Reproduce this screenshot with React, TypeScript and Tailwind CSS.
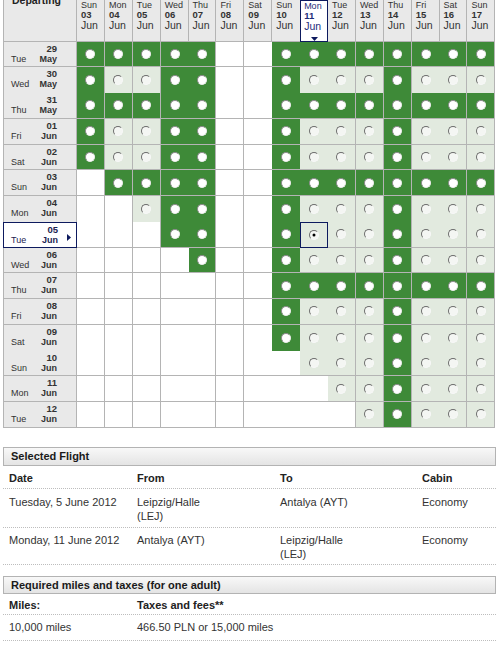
import React from "react";

type Kind = "G" | "L" | "W" | "S";

const LINE = "border-[#b4b4b4]";
const NAVY = "border-[#0d1a5e]";

const DATE_COLS: [string, string][] = [
  ["Sun", "03"], ["Mon", "04"], ["Tue", "05"], ["Wed", "06"], ["Thu", "07"],
  ["Fri", "08"], ["Sat", "09"], ["Sun", "10"], ["Mon", "11"], ["Tue", "12"],
  ["Wed", "13"], ["Thu", "14"], ["Fri", "15"], ["Sat", "16"], ["Sun", "17"],
];

const DEPART_ROWS: { d: string; n: string; m: string; c: string }[] = [
  { d: "Tue", n: "29", m: "May", c: "GGGGGWWGGGGGGGG" },
  { d: "Wed", n: "30", m: "May", c: "GLLGGWWGLLLGLLL" },
  { d: "Thu", n: "31", m: "May", c: "GGGGGWWGGGGGGGG" },
  { d: "Fri", n: "01", m: "Jun", c: "GLLGGWWGLLLGLLL" },
  { d: "Sat", n: "02", m: "Jun", c: "GLLGGWWGLLLGLLL" },
  { d: "Sun", n: "03", m: "Jun", c: "WGGGGWWGGGGGGGG" },
  { d: "Mon", n: "04", m: "Jun", c: "WWLGGWWGLLLGLLL" },
  { d: "Tue", n: "05", m: "Jun", c: "WWWGGWWGSLLGLLL" },
  { d: "Wed", n: "06", m: "Jun", c: "WWWWGWWGLLLGLLL" },
  { d: "Thu", n: "07", m: "Jun", c: "WWWWWWWGGGGGGGG" },
  { d: "Fri", n: "08", m: "Jun", c: "WWWWWWWGLLLGLLL" },
  { d: "Sat", n: "09", m: "Jun", c: "WWWWWWWGLLLGLLL" },
  { d: "Sun", n: "10", m: "Jun", c: "WWWWWWWWLLLGLLL" },
  { d: "Mon", n: "11", m: "Jun", c: "WWWWWWWWWLLGLLL" },
  { d: "Tue", n: "12", m: "Jun", c: "WWWWWWWWWWLGLLL" },
];

// column / row boundaries where the grid line is not drawn
const NO_V = new Set([3, 6, 7, 8, 12]);
const NO_H = new Set([1, 6, 11]);

const SEL_COL = 8;
const SEL_ROW = 7;

function Radio({ kind }: { kind: Kind }) {
  if (kind === "G") {
    return (
      <span className="block w-[10px] h-[10px] rounded-full bg-white border-[1.5px] border-t-[#8a8a8a] border-l-[#8a8a8a] border-r-[#ececec] border-b-[#ececec]" />
    );
  }
  return (
    <span className="relative block w-[10px] h-[10px] rounded-full bg-[#f4f6f3] border-[1.5px] border-t-[#6c6c6c] border-l-[#6c6c6c] border-r-[#f8f8f8] border-b-[#f8f8f8]">
      {kind === "S" && (
        <span className="absolute left-1/2 top-1/2 w-[3px] h-[3px] -translate-x-1/2 -translate-y-1/2 rounded-full bg-black" />
      )}
    </span>
  );
}

function cellBg(kind: Kind) {
  if (kind === "G") return "bg-[#3e8a38]";
  if (kind === "W") return "bg-white";
  return "bg-[#e2eadf]";
}

export default function App() {
  return (
    <div className="w-[499px] h-[653px] overflow-hidden bg-white text-[#333] [font-family:'Liberation_Sans',Arial,sans-serif]">
      <div className="pl-[3px]">
        <div className="grid grid-cols-[74px_repeat(15,27.9px)] grid-rows-[41.5px_repeat(15,25.75px)]">
          {/* corner heading */}
          <div className={`border-l border-r border-b ${LINE} bg-[#e9e9e9] pl-[8px] overflow-hidden`}>
            <span className="block -mt-[6px] text-[10.5px] leading-[12px] font-bold text-[#222]">Departing</span>
          </div>

          {/* return date headings */}
          {DATE_COLS.map(([d, n], i) => {
            const sel = i === SEL_COL;
            const cls = sel
              ? `border ${NAVY} bg-white text-[#1d2d7a] pl-[3px]`
              : `${i === SEL_COL - 1 ? "" : "border-r"} border-b ${LINE} bg-[#e9e9e9] text-[#333] pl-[4px]`;
            return (
              <div key={`h${i}`} className={`relative leading-[10px] ${cls}`}>
                <span className="block text-[9px]">{d}</span>
                <span className="block text-[9.5px] font-bold">{n}</span>
                <span className="block text-[10.5px]">Jun</span>
                {sel && (
                  <svg className="absolute left-[10px] top-[36px]" width="7" height="4" viewBox="0 0 7 4">
                    <polygon points="0,0 7,0 3.5,4" fill="#0d1a5e" />
                  </svg>
                )}
              </div>
            );
          })}

          {/* departure rows */}
          {DEPART_ROWS.map((row, r) => {
            const selRow = r === SEL_ROW;
            const hb = NO_H.has(r) ? "" : "border-b";
            return (
              <React.Fragment key={`r${r}`}>
                <div
                  className={`relative pt-[1px] leading-[11px] ${
                    selRow
                      ? `border ${NAVY} bg-white text-[#1b2250] pl-[7px] pr-[18px]`
                      : `border-l border-r ${hb} ${LINE} bg-[#e9e9e9] pl-[7px] pr-[19px]`
                  }`}
                >
                  <div className="text-right text-[9.5px] font-bold">{row.n}</div>
                  <div className="flex justify-between text-[9px]">
                    <span>{row.d}</span>
                    <span className="font-bold">{row.m}</span>
                  </div>
                  {selRow && (
                    <svg className="absolute left-[63px] top-[11px]" width="4" height="7" viewBox="0 0 4 7">
                      <polygon points="0,0 4,3.5 0,7" fill="#0d1a5e" />
                    </svg>
                  )}
                </div>
                {row.c.split("").map((ch, i) => {
                  const kind = ch as Kind;
                  const vb = NO_V.has(i) ? "" : "border-r";
                  const border = kind === "S" ? `border ${NAVY}` : `${vb} ${hb} ${LINE}`;
                  return (
                    <div key={`c${r}-${i}`} className={`flex items-center justify-center ${cellBg(kind)} ${border}`}>
                      {kind !== "W" && <Radio kind={kind} />}
                    </div>
                  );
                })}
              </React.Fragment>
            );
          })}
        </div>
      </div>

      {/* selected flight summary */}
      <div className="mt-[19px] ml-[3px] w-[493px] text-[11px] leading-[14px] text-[#333]">
        <div className="h-[19px] border border-[#b3b3b3] bg-linear-to-b from-[#f8f8f8] to-[#e4e4e4] pl-[7px] flex items-center font-bold text-[#1a1a1a]">
          Selected Flight
        </div>
        <div className="grid grid-cols-[128px_143px_142px_1fr] pl-[6px] pt-[5px] pb-[3px] border-b border-dotted border-[#bdbdbd] font-bold text-[#222]">
          <span>Date</span>
          <span>From</span>
          <span>To</span>
          <span>Cabin</span>
        </div>
        <div className="grid grid-cols-[128px_143px_142px_1fr] pl-[6px] pt-[6px] pb-[4px] border-b border-dotted border-[#bdbdbd]">
          <span>Tuesday, 5 June 2012</span>
          <span>
            Leipzig/Halle
            <br />
            (LEJ)
          </span>
          <span>Antalya (AYT)</span>
          <span>Economy</span>
        </div>
        <div className="grid grid-cols-[128px_143px_142px_1fr] pl-[6px] pt-[5px] pb-[3px] border-b border-dotted border-[#bdbdbd]">
          <span>Monday, 11 June 2012</span>
          <span>Antalya (AYT)</span>
          <span>
            Leipzig/Halle
            <br />
            (LEJ)
          </span>
          <span>Economy</span>
        </div>

        <div className="mt-[11px] h-[18px] border border-[#b3b3b3] bg-linear-to-b from-[#f8f8f8] to-[#e4e4e4] pl-[7px] flex items-center font-bold text-[#1a1a1a]">
          Required miles and taxes (for one adult)
        </div>
        <div className="grid grid-cols-[128px_1fr] pl-[6px] pt-[4px] pb-[2px] border-b border-dotted border-[#bdbdbd] font-bold text-[#222]">
          <span>Miles:</span>
          <span>Taxes and fees**</span>
        </div>
        <div className="grid grid-cols-[128px_1fr] pl-[6px] pt-[5px] pb-[6px] border-b border-dotted border-[#bdbdbd]">
          <span>10,000 miles</span>
          <span>466.50 PLN or 15,000 miles</span>
        </div>
      </div>
    </div>
  );
}
